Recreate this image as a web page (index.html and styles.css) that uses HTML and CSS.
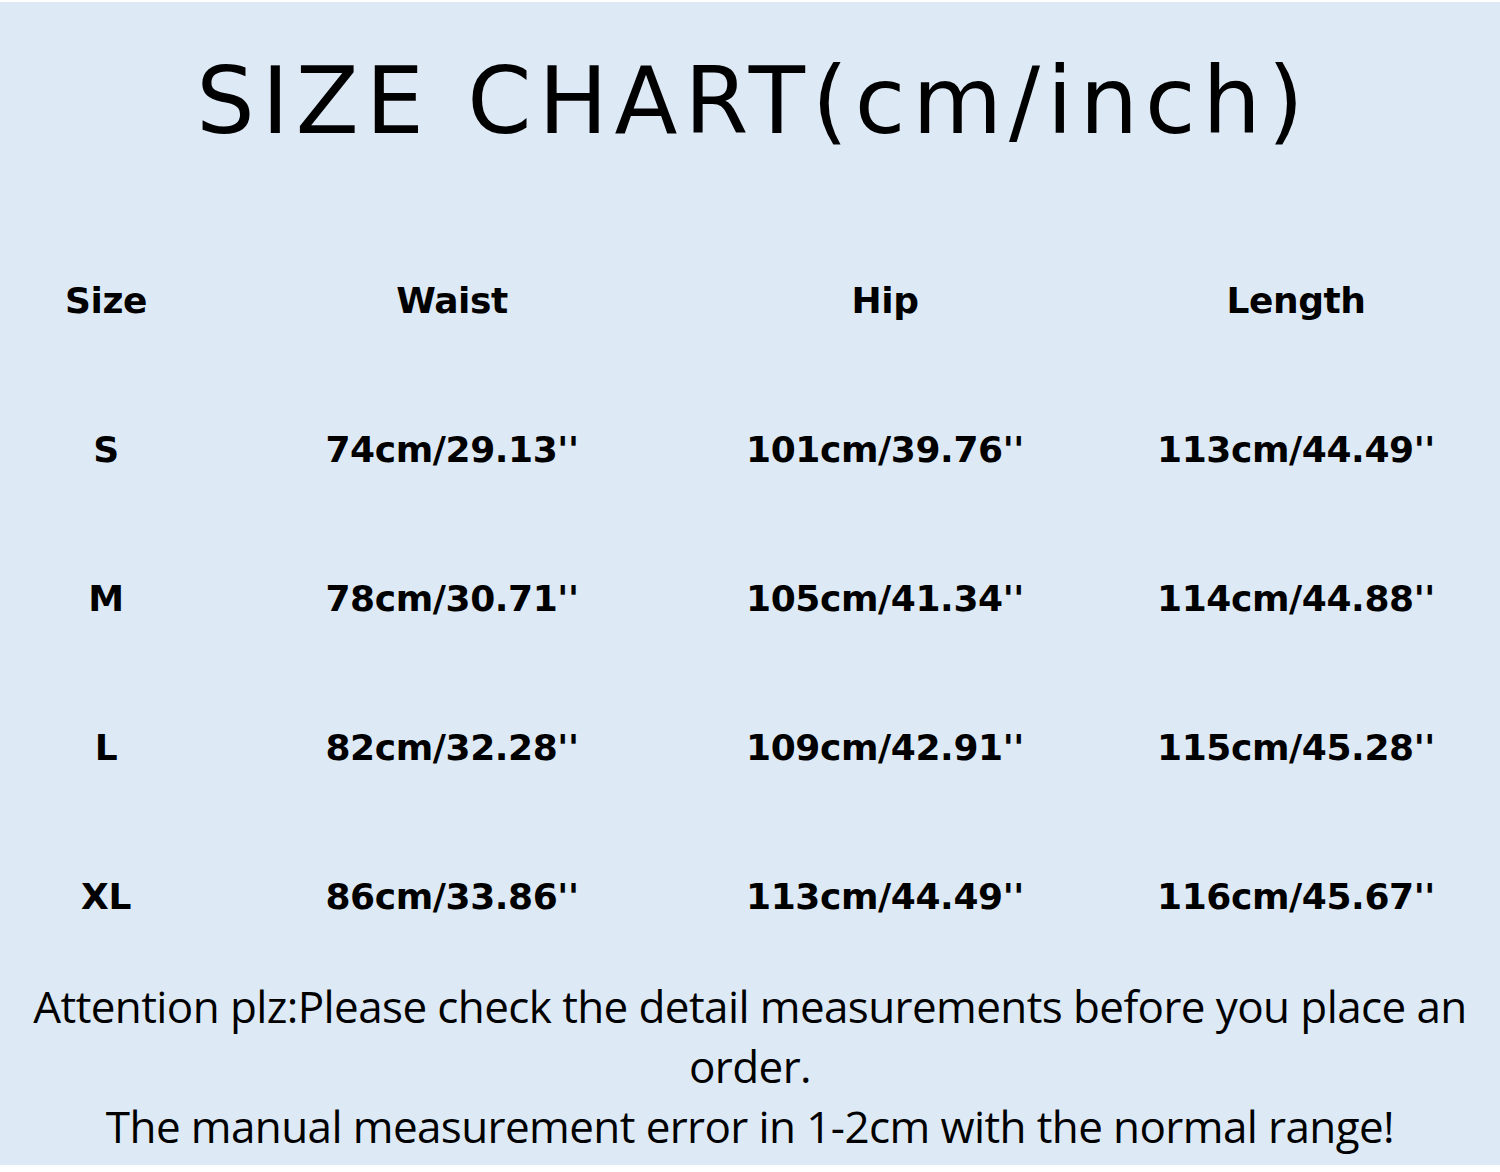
FILE: index.html
```html
<!DOCTYPE html>
<html lang="en">
<head>
<meta charset="utf-8">
<title>Size Chart</title>
<link rel="stylesheet" href="styles.css">
</head>
<body>
<div class="page">
  <h1 class="title">SIZE CHART(cm/inch)</h1>
  <div class="chart">
    <div class="cell head">Size</div>
    <div class="cell head">Waist</div>
    <div class="cell head">Hip</div>
    <div class="cell head">Length</div>

    <div class="cell">S</div>
    <div class="cell">74cm/29.13''</div>
    <div class="cell">101cm/39.76''</div>
    <div class="cell">113cm/44.49''</div>

    <div class="cell">M</div>
    <div class="cell">78cm/30.71''</div>
    <div class="cell">105cm/41.34''</div>
    <div class="cell">114cm/44.88''</div>

    <div class="cell">L</div>
    <div class="cell">82cm/32.28''</div>
    <div class="cell">109cm/42.91''</div>
    <div class="cell">115cm/45.28''</div>

    <div class="cell">XL</div>
    <div class="cell">86cm/33.86''</div>
    <div class="cell">113cm/44.49''</div>
    <div class="cell">116cm/45.67''</div>
  </div>
  <div class="note">
    <p>Attention plz:Please check the detail measurements before you place an order.</p>
    <p>The manual measurement error in 1-2cm with the normal range!</p>
  </div>
</div>
</body>
</html>
```

FILE: styles.css
```css
html, body {
  margin: 0;
  padding: 0;
  background: #ffffff;
}

.page {
  margin-top: 2px;
  height: 1163px;
  background: #dde9f5;
  color: #000;
  overflow: hidden;
}

.title {
  margin: 0;
  padding-top: 40px;
  padding-left: 7px;
  height: 188px;
  box-sizing: border-box;
  text-align: center;
  font-family: "DejaVu Sans", sans-serif;
  font-weight: normal;
  font-size: 92px;
  line-height: 120px;
  letter-spacing: 7px;
}

.chart {
  display: grid;
  grid-template-columns: 212px 480px 386px 436px;
  grid-auto-rows: 149px;
  margin-top: 36px;
}

.cell {
  display: flex;
  align-items: center;
  justify-content: center;
  font-family: "DejaVu Sans", sans-serif;
  font-weight: bold;
  font-size: 36px;
  letter-spacing: -0.4px;
}

.note {
  margin-top: 5px;
  padding: 0 20px;
  text-align: center;
  font-family: "Open Sans", sans-serif;
  font-size: 44px;
  line-height: 60px;
  letter-spacing: -0.6px;
}

.note p {
  margin: 0;
}
```
